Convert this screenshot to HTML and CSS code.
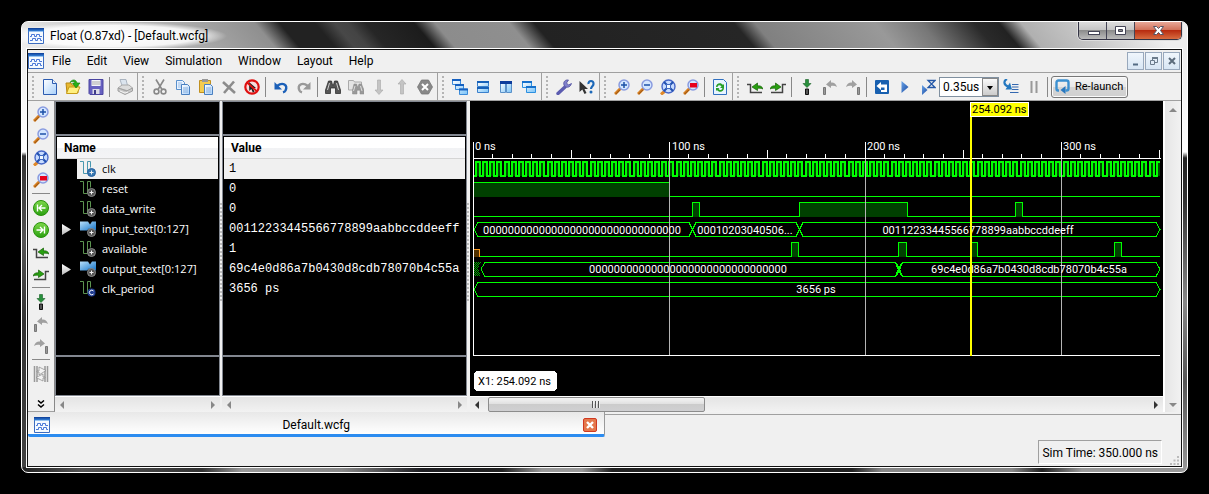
FILE: index.html
```html
<!DOCTYPE html>
<html lang="en">
<head>
<meta charset="utf-8">
<title>Float (O.87xd) - [Default.wcfg]</title>
<link rel="stylesheet" href="styles.css">
</head>
<body>
<svg class="sprite" aria-hidden="true">
  <defs>
    <linearGradient id="g-blue" x1="0" y1="0" x2="0" y2="1"><stop offset="0" stop-color="#0a3a94"/><stop offset="1" stop-color="#3a8ae0"/></linearGradient>
    <linearGradient id="g-page" x1="0" y1="0" x2="1" y2="1"><stop offset="0" stop-color="#fff"/><stop offset="1" stop-color="#a8d0fa"/></linearGradient>
    <linearGradient id="g-pane" x1="0" y1="0" x2="1" y2="1"><stop offset="0" stop-color="#fff"/><stop offset="1" stop-color="#7cc4f8"/></linearGradient>
    <linearGradient id="g-green" x1="0" y1="0" x2="0" y2="1"><stop offset="0" stop-color="#7ed84a"/><stop offset="1" stop-color="#2aa010"/></linearGradient>
    <linearGradient id="g-bus" x1="0" y1="0" x2="1" y2="1"><stop offset="0" stop-color="#b8e0fa"/><stop offset="1" stop-color="#1474c8"/></linearGradient>
    <linearGradient id="g-play" x1="0" y1="0" x2="1" y2="1"><stop offset="0" stop-color="#6aa4e8"/><stop offset="1" stop-color="#1848a0"/></linearGradient>
    <g id="lens"><path d="M1 15l5.500-5.500" stroke="#d88020" stroke-width="3"/><path d="M1.500 15.200l4.500-4.500" stroke="#8a4a10"/><circle cx="10" cy="6" r="5" fill="#d4e6ff" stroke="#8a9ce0" stroke-width="1.500"/></g>
    <g id="stem"><path d="M6.500 10h3v5.500h-3z" fill="#555" stroke="#111"/></g>
    <g id="left-arc"><path d="M15 8C14 4 11 3 9 3.500V1L4 5.500 9 9V7c2-.5 4-.3 6 1z"/></g>
    <g id="wave"><path d="M0 .5h3.500v12h4v-12h3v6" fill="none"/></g>
    <g id="gear"><circle cx="11.500" cy="11.500" r="4"/><path d="M11.500 9.500v4M9.500 11.500h4" stroke="#eee"/></g>
  </defs>
  <symbol id="app" viewBox="0 0 16 16"><path d="M.5.5h15v15H.5z" fill="#f4faff" stroke="#3c6cc0"/><path d="M0 0h16v3.500H0z" fill="url(#g-blue)"/><path d="M2 8.500h1.500v-2h3v2h2v-2h3v2h2.500M2 12.500h2.500v-2h3v2h2v-2h3v2h1.500" fill="none" stroke="#4a78d8"/></symbol>
  <symbol id="new" viewBox="0 0 16 16"><path d="M1.500.5h9l4 4v11h-13z" fill="url(#g-page)" stroke="#2c5cb0"/><path d="M10.500.5v4h4" fill="#e8f2ff" stroke="#2c5cb0"/></symbol>
  <symbol id="open" viewBox="0 0 16 16"><path d="M1 4h5l1 2h6v8H2z" fill="#e8b830" stroke="#b88810"/><path d="M1.500 14.500L4 8h11l-3 6.500z" fill="#fff080" stroke="#c89c18"/><path d="M5 3.500C7 0 11 0 12 4h3l-4 5-3.500-5H10C9.500 2 7 2 5 3.500z" fill="#28b018" stroke="#108008" stroke-width=".6"/></symbol>
  <symbol id="save" viewBox="0 0 16 16"><path d="M1 .5h14v15H2l-1-1z" fill="#6660c0" stroke="#4a44a0"/><path d="M3.500 1h9v6h-9z" fill="#f4f4fa"/><path d="M4 3h8M4 5h8" stroke="#aaa"/><path d="M4.500 10h7v5h-7z" fill="#dcdce8"/><path d="M6 11h2v4H6z" fill="#403c88"/></symbol>
  <symbol id="print" viewBox="0 0 16 16"><path d="M3 .5h6l1.500 6H5z" fill="#dbe4ee" stroke="#aab4c0"/><path d="M1 9l4-3h7l3.500 3-4 3z" fill="#dcdcdc" stroke="#a8a8a8"/><path d="M1 9v3l7 3.500 7.500-3.500V9l-6 3z" fill="#c8c8c8" stroke="#a0a0a0"/><path d="M3 12l5 2 3-1" fill="none" stroke="#f4f4f4"/></symbol>
  <symbol id="cut" viewBox="0 0 16 16"><path d="M4 .5l6 10M12 .5l-6 10" stroke="#888" stroke-width="1.600"/><circle cx="4.500" cy="12.500" r="2.400" fill="none" stroke="#888" stroke-width="1.600"/><circle cx="11.500" cy="12.500" r="2.400" fill="none" stroke="#888" stroke-width="1.600"/></symbol>
  <symbol id="copy" viewBox="0 0 16 16"><path d="M1.500 1.500h6l2 2v7h-8z" fill="#e8f2ff" stroke="#5a90cc"/><path d="M3 4h4M3 6h4M3 8h3" stroke="#9cc0e8"/><path d="M6.500 5.500h6l2 2v8h-8z" fill="url(#g-page)" stroke="#4a80c0"/><path d="M8 9h5M8 11h5M8 13h5" stroke="#88b0e0"/></symbol>
  <symbol id="paste" viewBox="0 0 16 16"><path d="M1.500 1.500h11v12h-11z" fill="#f4cc50" stroke="#c09020"/><path d="M4 0h6v3H4z" fill="#999"/><path d="M6.500 5.500h6l2 2v8h-8z" fill="url(#g-page)" stroke="#4a80c0"/><path d="M8 9h5M8 11h5M8 13h5" stroke="#88b0e0"/></symbol>
  <symbol id="delete" viewBox="0 0 16 16"><path d="M2 3l12 11M13 2.500L3 14" stroke="#8c8c8c" stroke-width="2.600"/></symbol>
  <symbol id="nopick" viewBox="0 0 16 16"><circle cx="8" cy="8" r="6.700" fill="#f8dcdc" stroke="#e01010" stroke-width="2.200"/><path d="M5 3l7 6-3 .3 1.500 3.500-1.700.7-1.500-3.500-2 2z" fill="#222"/><path d="M3 3.500l10 9" stroke="#e01010" stroke-width="1.800"/></symbol>
  <symbol id="undo" viewBox="0 0 16 16"><path d="M4 7c6-4.500 11-1 8.500 4.500-.5 1-1.500 1.500-2.500 1.800" fill="none" stroke="#1c60b8" stroke-width="2.400"/><path d="M1.500 3v7.500H9z" fill="#1c60b8"/></symbol>
  <symbol id="redo" viewBox="0 0 16 16"><path d="M12 7C6 2.500 1 6 3.500 11.500c.5 1 1.500 1.500 2.500 1.800" fill="none" stroke="#999" stroke-width="2.400"/><path d="M14.500 3v7.500H7z" fill="#999"/></symbol>
  <symbol id="find" viewBox="0 0 16 16"><path d="M3.500 2h3l1 4h1l1-4h3l3 9v3.500h-5V9h-5v5.500h-5V11z" fill="#555" stroke="#222" stroke-width=".7"/><path d="M4.500 4L2.500 11M11.500 4l2 7" stroke="#ccc"/></symbol>
  <symbol id="findall" viewBox="0 0 16 16"><path d="M.5 1.500h5l1 1.500h7v8h-13z" fill="#e4e4e4" stroke="#aaa"/><path d="M6 5h2.500l1 3h.5l1-3h2.500l2.500 6v4h-4v-4h-3v4H4.500v-4z" fill="#999" stroke="#888" stroke-width=".5"/><path d="M7 7l-1.500 5M12.500 7l1.500 5" stroke="#ddd"/></symbol>
  <symbol id="down" viewBox="0 0 16 16"><path d="M6.500 1h3v10H12l-4 4.500L4 11h2.500z" fill="#c4c4c4" stroke="#a8a8a8" stroke-width=".6"/></symbol>
  <symbol id="up" viewBox="0 0 16 16"><path d="M6.500 15h3V5H12L8 .5 4 5h2.500z" fill="#c4c4c4" stroke="#a8a8a8" stroke-width=".6"/></symbol>
  <symbol id="stop" viewBox="0 0 16 16"><path d="M4.500 1h7l4 7-4 7h-7l-4-7z" fill="#888" stroke="#777" stroke-width=".8"/><path d="M5 5l6 6M11 5l-6 6" stroke="#fff" stroke-width="2"/></symbol>
  <symbol id="cascade" viewBox="0 0 16 16"><g fill="url(#g-pane)" stroke="#3a8ad8"><path d="M.5.500h8v5h-8zM3.500 5.500h8v5h-8zM7.500 10h8v5.500h-8z"/></g><path d="M0 1h9M3 6h9M7 10.500h9" stroke="#1560c0" stroke-width="2"/></symbol>
  <symbol id="tileh" viewBox="0 0 16 16"><path d="M2.500 2.500h11v5h-11zM2.500 8.500h11v5h-11z" fill="url(#g-pane)" stroke="#3a80cc"/><path d="M2 3h12M2 9h12" stroke="#1560b8" stroke-width="2"/></symbol>
  <symbol id="tilev" viewBox="0 0 16 16"><path d="M2.500 2.500h5v11h-5zM8.500 2.500h5v11h-5z" fill="url(#g-pane)" stroke="#5a90c8"/><path d="M2 3.500h12" stroke="#0c3c9c" stroke-width="3"/></symbol>
  <symbol id="float" viewBox="0 0 16 16"><path d="M1.500 2.500h9v6h-9zM5.500 7.500h9v6h-9z" fill="url(#g-pane)" stroke="#2c90e0"/><path d="M1 3h10M5 8h10" stroke="#1570cc" stroke-width="2"/></symbol>
  <symbol id="wrench" viewBox="0 0 16 16"><path d="M2 14.500L9 8" stroke="#5c5cb0" stroke-width="3.400" stroke-linecap="round"/><path d="M12.500 1C9 .5 7 3 8 6c1 3 6 3.500 7.500-1.500L12.500 6l-2-2z" fill="#8080cc" stroke="#5050a0" stroke-width=".8"/></symbol>
  <symbol id="whats" viewBox="0 0 16 16"><path d="M.5 2v11l2.800-2.500L5.500 15l2-1-2-4H9z" fill="#333"/><path d="M9.500 5C9 1 15 1 14.500 5c0 2-2.500 2.500-2.500 5" fill="none" stroke="#1c68b8" stroke-width="2.200"/><circle cx="12" cy="13" r="1.500" fill="#1c68b8"/></symbol>
  <symbol id="zin" viewBox="0 0 16 16"><use href="#lens"/><path d="M7 6h6M10 3v6" stroke="#1c50a8" stroke-width="1.500"/></symbol>
  <symbol id="zout" viewBox="0 0 16 16"><use href="#lens"/><path d="M7 6h6" stroke="#1c50a8" stroke-width="1.500"/></symbol>
  <symbol id="zfit" viewBox="0 0 16 16"><path d="M1 15.500L5 12" stroke="#e08828" stroke-width="3"/><circle cx="8.500" cy="7.500" r="6.500" fill="#c8dcff" stroke="#4868c8" stroke-width="1.400"/><path d="M4 3l9 9M13 3l-9 9" stroke="#2050b0" stroke-width="2"/><path d="M6.500 5.500h4v4h-4z" fill="#f0f8ff" stroke="#4068c0"/></symbol>
  <symbol id="zcur" viewBox="0 0 16 16"><use href="#lens"/><path d="M7 4h7v4.500H7z" fill="#e8001c"/></symbol>
  <symbol id="refresh" viewBox="0 0 16 16"><path d="M1.500.5h10l3 3v12h-13z" fill="#e8f4ff" stroke="#3070c0"/><path d="M4 8c0-4 5-5 7-2l1-1v4H8l1.500-1.500C8 5.500 6 6 5.500 8zM12 9c0 4-5 5-7 2l-1 1V9h3.500L6.500 10C8 12 10 11 10.500 9z" fill="#28a028"/></symbol>
  <symbol id="prev" viewBox="0 0 16 16"><path d="M0 5.500h3.500v8H15" fill="none" stroke="#444" stroke-width="1.500"/><path d="M16 10c-1-3-3.500-3.500-5.500-3v-3L5 8l5.500 3.500v-2C12 9 14 9 16 10z" fill="#28a010" stroke="#186008" stroke-width=".7"/></symbol>
  <symbol id="next" viewBox="0 0 16 16"><path d="M16 5.500h-3.500v8H1" fill="none" stroke="#444" stroke-width="1.500"/><path d="M0 10c1-3 3.500-3.500 5.500-3v-3L11 8l-5.500 3.500v-2C4 9 2 9 0 10z" fill="#28a010" stroke="#186008" stroke-width=".7"/></symbol>
  <symbol id="mark" viewBox="0 0 16 16"><use href="#stem"/><path d="M6.500.5h3v4H12L8 8.500 4 4.500h2.500z" fill="#28903c" stroke="#146024" stroke-width=".6"/></symbol>
  <symbol id="mprev" viewBox="0 0 16 16"><path d="M1.500 8.500h2v7h-2z" fill="#999" stroke="#777"/><use href="#left-arc" fill="#a0a0a0"/></symbol>
  <symbol id="mnext" viewBox="0 0 16 16"><path d="M12.500 8.500h2v7h-2z" fill="#999" stroke="#777"/><use href="#left-arc" fill="#a0a0a0" transform="translate(16) scale(-1 1)"/></symbol>
  <symbol id="restart" viewBox="0 0 16 16"><rect x="1" y="1" width="14" height="14" rx="1" fill="#1860b0"/><path d="M2.500 7l4.500-4v2.500h6V13H7v-2h3.500V8.500H7V11z" fill="#fff"/></symbol>
  <symbol id="play" viewBox="0 0 16 16"><path d="M4.500 2l7 6-7 6z" fill="url(#g-play)"/></symbol>
  <symbol id="playfor" viewBox="0 0 16 16"><path d="M2 6l5.500 5L2 16z" fill="url(#g-play)"/><path d="M8 1.500h7L8 8.500h7z" fill="none" stroke="#2458a8" stroke-width="1.300"/></symbol>
  <symbol id="step" viewBox="0 0 16 16"><path d="M4 0C0 2 1 6 5 7.500" fill="none" stroke="#2478c0" stroke-width="2.200"/><path d="M2.500 10.500H9l-2-7z" fill="#2478c0"/><path d="M9 5.500h6.500M9 8h6.500M9 10.500h6.500M7 13.500h8.500" stroke="#3468b0"/></symbol>
  <symbol id="pause" viewBox="0 0 16 16"><path d="M5.500 2v12M10.500 2v12" stroke="#999" stroke-width="2"/></symbol>
  <symbol id="relaunch" viewBox="0 0 16 16"><path d="M4 11.500H3q-1.500 0-1.500-2V3.500q0-2 2-2h8q2 0 2 2v6q0 2-2 2h-1" fill="none" stroke="#3c90d0" stroke-width="2.400"/><path d="M10.500 7v8L5.500 11z" fill="#2878c0"/></symbol>
  <symbol id="first" viewBox="0 0 16 16"><circle cx="8" cy="8" r="7.500" fill="url(#g-green)" stroke="#28900c"/><path d="M4.500 4.500v7M12.500 8H6.500M9 5L6 8l3 3" fill="none" stroke="#fff" stroke-width="1.400"/></symbol>
  <symbol id="last" viewBox="0 0 16 16"><circle cx="8" cy="8" r="7.500" fill="url(#g-green)" stroke="#28900c"/><path d="M11.500 4.500v7M3.500 8h6M7 5l3 3-3 3" fill="none" stroke="#fff" stroke-width="1.400"/></symbol>
  <symbol id="swap" viewBox="0 0 16 16"><path d="M1.500 0v16M4 0v16M12 0v16M14.500 0v16" stroke="#999" stroke-width="1.500"/><path d="M6 1v4H4v1h2v3l7-4.500zM10 15v-3h2v-1h-2V8l-7 3.500z" fill="#f4f4f4" stroke="#888" stroke-width=".7"/></symbol>
  <symbol id="sig-on" viewBox="0 0 16 16"><use href="#wave" stroke="#4898b0"/><use href="#gear" fill="#3878b0" stroke="#2860a0"/></symbol>
  <symbol id="sig" viewBox="0 0 16 16"><use href="#wave" stroke="#5c9450"/><use href="#gear" fill="#555" stroke="#888"/></symbol>
  <symbol id="bus" viewBox="0 0 16 16"><path d="M0 .5h8l2 3 2-3h4v9h-5l-2-2-2 2H0z" fill="url(#g-bus)"/><use href="#gear" fill="#555" stroke="#888"/></symbol>
  <symbol id="const" viewBox="0 0 16 16"><use href="#wave" stroke="#5c9450"/><circle cx="11.500" cy="11.500" r="4" fill="#203c90"/><path d="M13.500 10a2.300 2.300 0 1 0 0 3" fill="none" stroke="#fff"/></symbol>
</svg>

<main class="window">
  <header class="caption">
    <svg class="icon"><use href="#app"/></svg>
    <h1 class="caption-text">Float (O.87xd) - [Default.wcfg]</h1>
    <div class="caption-buttons">
      <button class="cap" aria-label="Minimize"><svg viewBox="0 0 27 17"><rect x="9.500" y="9.500" width="11" height="3" fill="#fff" stroke="#445"/></svg></button>
      <button class="cap" aria-label="Maximize"><svg viewBox="0 0 27 17"><path d="M8.500 4.500h10v8h-10zM11.500 7.500v2h4v-2z" fill="#fff" stroke="#445" fill-rule="evenodd"/></svg></button>
      <button class="cap cap-close" aria-label="Close"><svg viewBox="0 0 46 17"><path d="M18.500 4.500h3l2 2 2-2h3l-3 4 3 4h-3l-2-2-2 2h-3l3-4z" fill="#fff" stroke="#556"/></svg></button>
    </div>
  </header>

  <div class="client">
    <nav class="menubar">
      <svg class="icon"><use href="#app"/></svg>
      <button class="menu">File</button><button class="menu">Edit</button><button class="menu">View</button><button class="menu">Simulation</button><button class="menu">Window</button><button class="menu">Layout</button><button class="menu">Help</button>
      <div class="mdi">
        <button class="mdi-btn" aria-label="Minimize document"><svg viewBox="0 0 15 16"><path d="M5 11.500h5" stroke="#556c84" stroke-width="2"/></svg></button>
        <button class="mdi-btn" aria-label="Restore document"><svg viewBox="0 0 15 16"><path d="M6.500 7V4.500h5v5H9M4.500 7.500h4v4h-4z" fill="none" stroke="#6c7c8c"/><path d="M6 5h6" stroke="#6c7c8c" stroke-width="2"/></svg></button>
        <button class="mdi-btn" aria-label="Close document"><svg viewBox="0 0 15 16"><path d="M5 5l6 6M11 5l-6 6" stroke="#5c6c7c" stroke-width="2"/></svg></button>
      </div>
    </nav>

    <div class="toolbar">
      <div class="group">
        <button class="tool" aria-label="New"><svg class="icon"><use href="#new"/></svg></button>
        <button class="tool" aria-label="Open"><svg class="icon"><use href="#open"/></svg></button>
        <button class="tool" aria-label="Save"><svg class="icon"><use href="#save"/></svg></button>
        <span class="sep"></span>
        <button class="tool" aria-label="Print"><svg class="icon"><use href="#print"/></svg></button>
      </div>
      <div class="group">
        <button class="tool" aria-label="Cut"><svg class="icon"><use href="#cut"/></svg></button>
        <button class="tool" aria-label="Copy"><svg class="icon"><use href="#copy"/></svg></button>
        <button class="tool" aria-label="Paste"><svg class="icon"><use href="#paste"/></svg></button>
        <button class="tool" aria-label="Delete"><svg class="icon"><use href="#delete"/></svg></button>
        <button class="tool" aria-label="Cancel selection"><svg class="icon"><use href="#nopick"/></svg></button>
        <span class="sep"></span>
        <button class="tool" aria-label="Undo"><svg class="icon"><use href="#undo"/></svg></button>
        <button class="tool" aria-label="Redo"><svg class="icon"><use href="#redo"/></svg></button>
        <span class="sep"></span>
        <button class="tool" aria-label="Find"><svg class="icon"><use href="#find"/></svg></button>
        <button class="tool" aria-label="Find in files"><svg class="icon"><use href="#findall"/></svg></button>
        <button class="tool" aria-label="Find next"><svg class="icon"><use href="#down"/></svg></button>
        <button class="tool" aria-label="Find previous"><svg class="icon"><use href="#up"/></svg></button>
        <button class="tool" aria-label="Stop"><svg class="icon"><use href="#stop"/></svg></button>
      </div>
      <div class="group">
        <button class="tool" aria-label="Cascade"><svg class="icon"><use href="#cascade"/></svg></button>
        <button class="tool" aria-label="Tile horizontally"><svg class="icon"><use href="#tileh"/></svg></button>
        <button class="tool" aria-label="Tile vertically"><svg class="icon"><use href="#tilev"/></svg></button>
        <button class="tool" aria-label="Float window"><svg class="icon"><use href="#float"/></svg></button>
      </div>
      <div class="group">
        <button class="tool" aria-label="Preferences"><svg class="icon"><use href="#wrench"/></svg></button>
        <button class="tool" aria-label="What's this"><svg class="icon"><use href="#whats"/></svg></button>
      </div>
      <div class="group">
        <button class="tool" aria-label="Zoom in"><svg class="icon"><use href="#zin"/></svg></button>
        <button class="tool" aria-label="Zoom out"><svg class="icon"><use href="#zout"/></svg></button>
        <button class="tool" aria-label="Zoom to full view"><svg class="icon"><use href="#zfit"/></svg></button>
        <button class="tool" aria-label="Zoom to cursor"><svg class="icon"><use href="#zcur"/></svg></button>
        <span class="sep"></span>
        <button class="tool" aria-label="Refresh"><svg class="icon"><use href="#refresh"/></svg></button>
      </div>
      <div class="group group-last">
        <button class="tool" aria-label="Previous transition"><svg class="icon"><use href="#prev"/></svg></button>
        <button class="tool" aria-label="Next transition"><svg class="icon"><use href="#next"/></svg></button>
        <span class="sep"></span>
        <button class="tool" aria-label="Add marker"><svg class="icon"><use href="#mark"/></svg></button>
        <button class="tool" aria-label="Previous marker"><svg class="icon"><use href="#mprev"/></svg></button>
        <button class="tool" aria-label="Next marker"><svg class="icon"><use href="#mnext"/></svg></button>
        <span class="sep"></span>
        <button class="tool" aria-label="Restart"><svg class="icon"><use href="#restart"/></svg></button>
        <button class="tool" aria-label="Run all"><svg class="icon"><use href="#play"/></svg></button>
        <button class="tool" aria-label="Run for time"><svg class="icon"><use href="#playfor"/></svg></button>
        <div class="combo"><select class="combo-field" aria-label="Run time"><option>0.35us</option></select><span class="combo-arrow"></span></div>
        <button class="tool" aria-label="Step"><svg class="icon"><use href="#step"/></svg></button>
        <button class="tool" aria-label="Break"><svg class="icon"><use href="#pause"/></svg></button>
        <span class="sep"></span>
        <button class="relaunch"><svg class="icon"><use href="#relaunch"/></svg>Re-launch</button>
      </div>
    </div>

    <div class="body">
      <div class="sidebar">
        <button class="side" aria-label="Zoom in"><svg class="icon"><use href="#zin"/></svg></button>
        <button class="side" aria-label="Zoom out"><svg class="icon"><use href="#zout"/></svg></button>
        <button class="side" aria-label="Full view"><svg class="icon"><use href="#zfit"/></svg></button>
        <button class="side" aria-label="Zoom to cursor"><svg class="icon"><use href="#zcur"/></svg></button>
        <span class="side-sep"></span>
        <button class="side" aria-label="Go to start"><svg class="icon"><use href="#first"/></svg></button>
        <button class="side" aria-label="Go to end"><svg class="icon"><use href="#last"/></svg></button>
        <button class="side" aria-label="Previous transition"><svg class="icon"><use href="#prev"/></svg></button>
        <button class="side" aria-label="Next transition"><svg class="icon"><use href="#next"/></svg></button>
        <span class="side-sep"></span>
        <button class="side" aria-label="Add marker"><svg class="icon"><use href="#mark"/></svg></button>
        <button class="side" aria-label="Previous marker"><svg class="icon"><use href="#mprev"/></svg></button>
        <button class="side" aria-label="Next marker"><svg class="icon"><use href="#mnext"/></svg></button>
        <span class="side-sep"></span>
        <button class="side" aria-label="Swap cursors"><svg class="icon"><use href="#swap"/></svg></button>
        <button class="more" aria-label="More tools"><svg viewBox="0 0 8 8"><path d="M1 .5l3 2.500 3-2.500M1 4.500l3 2.500 3-2.500" fill="none" stroke="#000" stroke-width="1.500"/></svg></button>
      </div>

      <section class="column column-name">
        <div class="list">
          <div class="list-top"></div>
          <h2 class="list-head">Name</h2>
          <ul class="rows">
            <li class="row name selected"><svg class="icon"><use href="#sig-on"/></svg>clk</li>
            <li class="row name"><svg class="icon"><use href="#sig"/></svg>reset</li>
            <li class="row name"><svg class="icon"><use href="#sig"/></svg>data_write</li>
            <li class="row name"><button class="expand" aria-label="Expand input_text"></button><svg class="icon"><use href="#bus"/></svg>input_text[0:127]</li>
            <li class="row name"><svg class="icon"><use href="#sig"/></svg>available</li>
            <li class="row name"><button class="expand" aria-label="Expand output_text"></button><svg class="icon"><use href="#bus"/></svg>output_text[0:127]</li>
            <li class="row name"><svg class="icon"><use href="#const"/></svg>clk_period</li>
          </ul>
          <div class="list-bottom"></div>
        </div>
        <div class="hscroll idle"><i class="arr left"></i><i class="arr right"></i></div>
      </section>
      <div class="splitter"></div>
      <section class="column column-value">
        <div class="list">
          <div class="list-top"></div>
          <h2 class="list-head">Value</h2>
          <ul class="rows">
            <li class="row value selected">1</li>
            <li class="row value">0</li>
            <li class="row value">0</li>
            <li class="row value">00112233445566778899aabbccddeeff</li>
            <li class="row value">1</li>
            <li class="row value">69c4e0d86a7b0430d8cdb78070b4c55a</li>
            <li class="row value">3656 ps</li>
          </ul>
          <div class="list-bottom"></div>
        </div>
        <div class="hscroll idle"><i class="arr left"></i><i class="arr right"></i></div>
      </section>
      <div class="splitter splitter-wide"></div>
      <section class="column column-wave">
        <div class="scope">
          <svg class="wave" width="693" height="294" viewBox="0 0 693 294">
            <defs>
              <pattern id="hatch" width="2" height="2" patternUnits="userSpaceOnUse"><path d="M0 0h1v1H0zM1 1h1v1H1z" fill="#0a0"/></pattern>
            </defs>
            <g class="fills">
              <path d="M4 80h195v15H4zM222 100h8v15h-8zM329 100h109v15H329zM545 100h8v15h-8zM321 140h8v15h-8zM428 140h9v15h-9zM500 140h8v15h-8zM644 140h8v15h-8z"/>
              <path class="clock-fill" id="clock-fill"/>
              <path class="unknown-fill" d="M4 147h5v8H4z"/>
              <path class="hatched" d="M4 160h7l-3 7 3 7H4z"/>
            </g>
            <path class="clock" id="clock"/>
            <path class="signal" d="M199.500 94.500H690M4 114.500h218.500v-14h7v14h99.500v-14h108.500v14h108v-14h7v14H690M9.500 154.500h312v-14h7v14h100v-14h8v14h64v-14h7v14h137v-14h7v14H690M4 80.500h195.500"/>
            <path class="signal" d="M8 120.500h211l7 14h100l7-14h353l4 7-4 7H333l-7-14H226l-7 14H8l-4-7zM11 167l4-6.500h410l8 14h253l4-7.500-4-6.500H433l-8 14H15l-4-7.500M8 180.500h678l4 7-4 7H8l-4-7z"/>
            <path class="signal heavy" d="M426 161l6 13M432 161l-6 13"/>
            <path class="unknown" d="M4 147.500h5.500v7"/>
            <path class="grid" d="M199.500 57v197M395.500 57v197M591.500 57v197"/>
            <path class="axis" d="M3.500 40v213.500H690M3 56.500h688M199.500 40v17M395.500 40v17M591.500 40v17"/>
            <path class="axis" id="ticks"/>
            <g class="labels">
              <text x="5" y="48">0 ns</text><text x="202" y="48">100 ns</text><text x="397" y="48">200 ns</text><text x="593" y="48">300 ns</text>
              <g text-anchor="middle">
                <text x="112" y="132">00000000000000000000000000000000</text>
                <text x="275" y="132">00010203040506...</text>
                <text x="508" y="132">00112233445566778899aabbccddeeff</text>
                <text x="218" y="171">00000000000000000000000000000000</text>
                <text x="559" y="171">69c4e0d86a7b0430d8cdb78070b4c55a</text>
                <text x="346" y="191">3656 ps</text>
              </g>
            </g>
            <g class="cursor">
              <path d="M500 15h2v239h-2z"/>
              <rect x="500.500" y=".5" width="58" height="14"/>
              <text x="502" y="11">254.092 ns</text>
            </g>
            <g class="readout">
              <rect x="4" y="269" width="83" height="20" rx="4"/>
              <text x="8" y="283">X1: 254.092 ns</text>
            </g>
          </svg>
        </div>
        <div class="hscroll"><i class="arr left"></i><div class="track"><div class="thumb"></div></div><i class="arr right"></i></div>
      </section>
      <div class="vscroll"><i class="arr top"></i><i class="arr bottom"></i></div>
    </div>

    <div class="tabs">
      <div class="tab"><svg class="icon"><use href="#app"/></svg><span class="tab-text">Default.wcfg</span><button class="tab-close" aria-label="Close tab"><svg viewBox="0 0 12 12"><path d="M3 3l6 6M9 3l-6 6" stroke="#fff" stroke-width="2.400"/></svg></button></div>
      <div class="tab-rest"></div>
    </div>
    <footer class="status">
      <div class="sim-time">Sim Time: 350.000 ns</div>
      <svg class="grip" viewBox="0 0 9 9"><path d="M7 0h2v2H7zM7 3.500h2v2H7zM3.500 3.500h2v2h-2zM7 7h2v2H7zM3.500 7h2v2h-2zM0 7h2v2H0z" fill="#bbb"/></svg>
    </footer>
  </div>
</main>
<script src="waves.js"></script>
</body>
</html>
```
FILE: styles.css
```css
* { box-sizing: border-box; }
body { margin: 0; padding: 21px; background: #000; color: #000; font: 12px/16px Roboto, "Noto Sans", sans-serif; }
button { margin: 0; padding: 0; border: 0; background: none; color: inherit; font: inherit; }
h1, h2, ul { margin: 0; padding: 0; font: inherit; list-style: none; }
svg { display: block; }
.sprite { position: absolute; width: 0; height: 0; }
.icon { width: 16px; height: 16px; flex: none; }

.window {
  border: 1px solid #fff; border-radius: 7px; padding: 0 5px 5px; overflow: hidden;
  background:
    linear-gradient(90deg, #222 0, #555 60px, #333 180px, #999 220px, #888 320px, #1e1e22 400px, #222 480px, #999 520px, #999 560px, #222 590px, #222 830px, #888 860px, #888 990px, #222 1020px, #999 1060px, #999 100%) bottom / 100% 5px no-repeat,
    linear-gradient(#e8e8e8 0, #fff 130px, #333 134px, #555 220px, #333 300px, #444 100%) left / 50% 100% no-repeat,
    linear-gradient(#e8e8e8 0, #fff 130px, #222 136px, #333 180px, #888 280px, #555 360px, #999 100%) right / 50% 100% no-repeat;
}
.caption {
  display: flex; align-items: center; gap: 6px; height: 27px; margin: 0 -5px; padding-left: 6px;
  background:
    radial-gradient(closest-side, #fff 0, rgba(255,255,255,.85) 75%, rgba(255,255,255,0) 100%) -20px 0 / 225px 28px no-repeat,
    linear-gradient(50deg, #eee 0, #ccc 60px, #aaa 140px, #8f8f8f 195px, #222 214px, #222 241px, #484848 256px, #444 266px, #262626 280px, #1c1c1c 317px, #8c8c8c 333px, #8f8f8f 390px, #222 409px, #262626 562px, #808080 578px, #999 670px, #777 705px, #2a2a2a 746px, #222 765px, #b0b0b0 782px, #c4c4c4 819px, #eee 880px);
}
.caption-text { flex: 1; }
.caption-buttons { display: flex; align-self: flex-start; margin-right: 5px; border: 1px solid #334; border-top: 0; border-radius: 0 0 5px 5px; overflow: hidden; box-shadow: 0 0 0 1px #ddd; }
.cap { width: 28px; height: 17px; border-right: 1px solid #445; background: linear-gradient(#ddd 0, #c4c4c4 48%, #8c8c8c 50%, #bbb 100%); }
.cap svg { width: 100%; height: 100%; }
.cap-close { width: 46px; border-right: 0; background: linear-gradient(#e8a898 0, #d07058 48%, #b82c10 50%, #d86c40 100%); }
.client { border: 1px solid #111; box-shadow: 0 0 0 1px #fff; background: #f0f0f0; }

.menubar { display: flex; align-items: center; gap: 16px; height: 23px; border-bottom: 1px solid #a0a0a0; }
.menubar > .icon { margin-right: -8px; }
.mdi { display: flex; gap: 1px; margin-left: auto; padding-right: 1px; }
.mdi-btn { width: 17px; height: 18px; border: 1px solid #98a8bc; background: linear-gradient(#f0f6fc, #d8e6f4); }
.mdi-btn svg { width: 100%; }

.toolbar { display: flex; height: 28px; border-bottom: 1px solid #a0a0a0; }
.group { display: flex; align-items: center; padding: 0 1px 0 10px; border-right: 1px solid #a0a0a0; background: repeating-linear-gradient(#b4b4b4 0 2px, #f0f0f0 2px 4px) 4px 3px / 2px 22px no-repeat; }
.group-last { border-right: 0; }
.tool { display: grid; place-items: center; width: 23px; height: 24px; flex: none; }
.sep { width: 2px; height: 20px; margin: 0 2px; border-left: 1px solid #888; }
.combo { position: relative; width: 60px; height: 20px; }
.combo-field { width: 100%; height: 100%; margin: 0; padding: 0 18px 0 3px; border: 1px solid #8090a0; border-radius: 0; appearance: none; background: #fff; color: #000; font: 12px Roboto, sans-serif; }
.combo-arrow { position: absolute; inset: 1px 1px 1px auto; width: 16px; border: 1px solid #888; background: linear-gradient(#fafafa, #ccc); pointer-events: none; }
.combo-arrow::after { content: ""; position: absolute; top: 7px; left: 4px; border: 3px solid transparent; border-top: 4px solid #000; border-bottom: 0; }
.relaunch { display: flex; align-items: center; gap: 4px; height: 22px; padding: 0 4px 0 3px; border: 1px solid #777; border-radius: 3px; background: linear-gradient(#f4f4f4, #e8e8e8 50%, #d4d4d4 52%, #d0d0d0); box-shadow: inset 0 0 0 1px #fafafa; font-size: 11px; }

.body { display: flex; height: 311px; }
.sidebar { display: flex; flex-direction: column; width: 27px; padding-top: 2px; border-right: 1px solid #888; border-bottom: 1px solid #a0a0a0; }
.side { display: grid; place-items: center; width: 26px; height: 22px; flex: none; }
.side-sep { height: 2px; margin: 2px 4px; flex: none; border-top: 1px solid #888; }
.more { display: grid; place-items: center; margin-top: auto; height: 14px; }
.more svg { width: 8px; height: 8px; }
.column { display: flex; flex-direction: column; }
.column-name { width: 165px; }
.column-value { width: 245px; }
.column-wave { flex: 1; min-width: 0; }
.list { display: flex; flex-direction: column; flex: 1; border: 1px solid #828790; background: #000; color: #fff; }
.list-top { height: 34px; border-bottom: 2px solid #828790; flex: none; }
.list-head { height: 22px; margin: 1px 1px 0; padding: 3px 7px 0; border-bottom: 1px solid #d5d5d5; background: linear-gradient(#fff 50%, #f1f2f4 52%, #f4f4f6); color: #000; font-weight: 700; }
.rows { flex: 1; }
.row { display: flex; align-items: center; height: 20px; margin: 0 1px; font: 11px/16px "Open Sans", "Noto Sans", sans-serif; }
.name { position: relative; margin-left: 21px; padding-left: 3px; gap: 6px; }
.value { padding-left: 5px; font: 12px/20px "Liberation Mono", monospace; }
.selected { background: #f0f0f0; color: #000; }
.expand { position: absolute; left: -15px; top: 5px; width: 9px; height: 11px; background: linear-gradient(#fff, #bbb); clip-path: polygon(0 0, 100% 50%, 0 100%); }
.list-bottom { height: 40px; border-top: 2px solid #828790; }
.splitter { width: 2px; background: repeating-linear-gradient(#bbb 0 2px, #f0f0f0 2px 4px) 0 102px / 2px 98px no-repeat #f0f0f0; }
.splitter-wide { width: 3px; }
.scope { flex: 1; padding-top: 1px; overflow: hidden; background: #000; border-right: 1px solid #000; }
.wave { shape-rendering: crispEdges; font: 11px Roboto, "Noto Sans", sans-serif; }
.fills { fill: #004000; }
.clock-fill { fill: #004800; }
.unknown-fill { fill: #503000; }
.fills .hatched { fill: url(#hatch); }
.clock, .signal, .unknown, .axis, .grid { fill: none; stroke: #0f0; }
.clock { stroke-width: 2; }
.heavy { stroke-width: 2; }
.unknown { stroke: #ff9c20; }
.axis { stroke: #fff; }
.grid { stroke: #b4b4b4; }
.labels { fill: #fff; }
.cursor { fill: #ff0; }
.cursor rect { stroke: #fff; }
.cursor text, .readout text { fill: #000; }
.readout rect { fill: #fff; }

.hscroll { display: flex; align-items: center; justify-content: space-between; height: 16px; padding: 0 5px; border-top: 1px solid #fff; background: linear-gradient(#e4e4e4, #f2f2f2); }
.arr { width: 0; height: 0; border: 4px solid transparent; }
.left { border-right-color: #333; border-left: 0; }
.right { border-left-color: #333; border-right: 0; }
.idle .left { border-right-color: #888; }
.idle .right { border-left-color: #888; }
.track { flex: 1; margin: 0 9px; align-self: stretch; }
.thumb { width: 33%; height: 15px; border: 1px solid #8c8c8c; border-radius: 2px; background: linear-gradient(#f4f4f4, #e0e0e0 48%, #ccc 50%, #d0d0d2); }
.thumb::after { content: ""; display: block; width: 9px; height: 7px; margin: 3px auto; background: repeating-linear-gradient(90deg, #555 0 1px, #eee 1px 2px, transparent 2px 3px); }
.vscroll { display: flex; flex-direction: column; align-items: center; justify-content: space-between; width: 18px; padding: 7px 0 5px; border-left: 2px solid #fff; background: linear-gradient(90deg, #e6e6e6, #f2f2f2); }
.top { border-bottom-color: #888; border-top: 0; }
.bottom { border-top-color: #888; border-bottom: 0; }

.tabs { display: flex; height: 25px; }
.tab { display: flex; align-items: center; flex: 0 0 50%; padding: 3px 7px 0 6px; border-bottom: 3px solid #2c8cf0; border-right: 1px solid #999; border-radius: 0 0 2px 2px; background: linear-gradient(#e8e8e8, #fff); }
.tab-text { flex: 1; text-align: center; }
.tab-close { display: grid; place-items: center; width: 14px; height: 14px; border: 1px solid #d03820; border-radius: 2px; background: #e4784c; }
.tab-close svg { width: 12px; height: 12px; }
.tab-rest { flex: 1; margin-top: 2px; border-top: 1px solid #a0a0a0; }
.status { display: flex; justify-content: flex-end; height: 29px; padding: 3px 2px 1px 0; }
.sim-time { height: 24px; padding: 4px 3px 0; border: 1px solid #a0a0a0; border-right-color: #fff; border-bottom-color: #fff; }
.grip { width: 9px; height: 9px; margin-left: 8px; align-self: flex-end; }
```
FILE: waves.js
```javascript
const SCALE = 1.96;
const ORIGIN = 4;
const LENGTH = 350;

function drawTicks() {
  let d = '';
  for (let ns = 10; ns <= LENGTH; ns += 10) {
    if (ns % 100 === 0) continue;
    const x = Math.floor(ORIGIN - 1 + ns * SCALE) + 0.5;
    d += `M${x} ${ns % 50 === 0 ? 48 : 52}V57`;
  }
  document.getElementById('ticks').setAttribute('d', d);
}

function drawClock(period) {
  const end = ORIGIN + LENGTH * SCALE;
  let line = `M${ORIGIN} 74`;
  let fill = '';
  for (let t = 1; t < LENGTH; t += period) {
    const rise = Math.round(ORIGIN + t * SCALE);
    const fall = Math.min(rise + 4, end);
    line += `H${rise}V60H${fall}`;
    if (fall < end) line += 'V74';
    fill += `M${rise} 60H${fall}V74H${rise}z`;
  }
  document.getElementById('clock').setAttribute('d', line);
  document.getElementById('clock-fill').setAttribute('d', fill);
}

drawTicks();
drawClock(3.656);
```
